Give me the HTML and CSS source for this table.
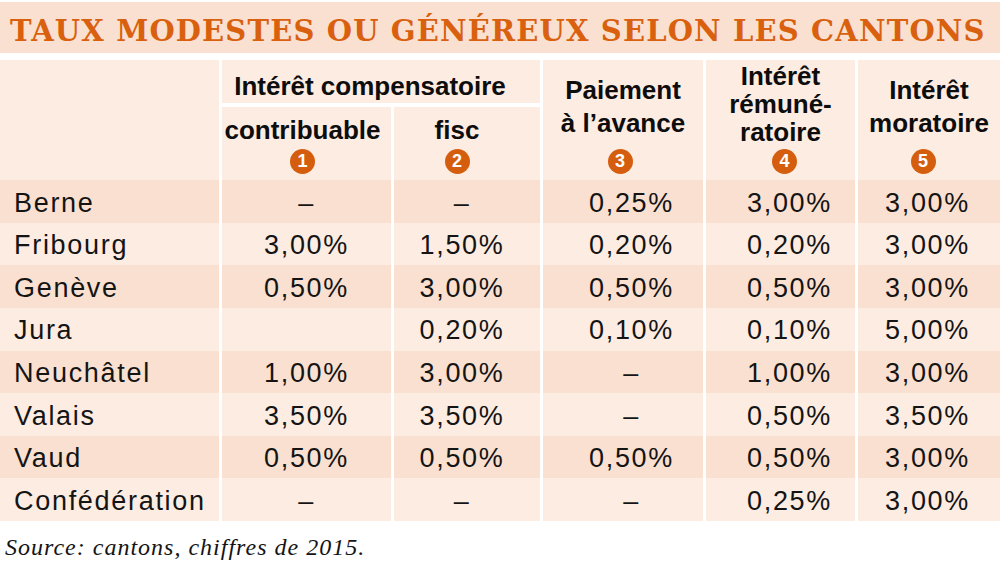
FILE: index.html
```html
<!DOCTYPE html>
<html lang="fr">
<head>
<meta charset="utf-8">
<title>Taux modestes ou généreux selon les cantons</title>
<link rel="stylesheet" href="styles.css">
</head>
<body>
<div class="page">
  <div class="band"><h1 class="title">TAUX MODESTES OU GÉNÉREUX SELON LES CANTONS</h1></div>
  <div class="table">
    <div class="h corner"></div>
    <div class="h group">Intérêt compensatoire</div>
    <div class="h tall c4"><div class="ht two">Paiement<br>à l’avance</div><span class="badge">3</span></div>
    <div class="h tall c5"><div class="ht three">Intérêt<br>rémuné-<br>ratoire</div><span class="badge">4</span></div>
    <div class="h tall c6"><div class="ht two">Intérêt<br>moratoire</div><span class="badge">5</span></div>
    <div class="h sub c2"><div class="ht one">contribuable</div><span class="badge">1</span></div>
    <div class="h sub c3"><div class="ht one">fisc</div><span class="badge">2</span></div>

    <div class="n d">Berne</div><div class="v d c2">–</div><div class="v d c3">–</div><div class="v d c4">0,25%</div><div class="v d c5">3,00%</div><div class="v d c6">3,00%</div>
    <div class="n l">Fribourg</div><div class="v l c2">3,00%</div><div class="v l c3">1,50%</div><div class="v l c4">0,20%</div><div class="v l c5">0,20%</div><div class="v l c6">3,00%</div>
    <div class="n d">Genève</div><div class="v d c2">0,50%</div><div class="v d c3">3,00%</div><div class="v d c4">0,50%</div><div class="v d c5">0,50%</div><div class="v d c6">3,00%</div>
    <div class="n l">Jura</div><div class="v l c2"></div><div class="v l c3">0,20%</div><div class="v l c4">0,10%</div><div class="v l c5">0,10%</div><div class="v l c6">5,00%</div>
    <div class="n d">Neuchâtel</div><div class="v d c2">1,00%</div><div class="v d c3">3,00%</div><div class="v d c4">–</div><div class="v d c5">1,00%</div><div class="v d c6">3,00%</div>
    <div class="n l">Valais</div><div class="v l c2">3,50%</div><div class="v l c3">3,50%</div><div class="v l c4">–</div><div class="v l c5">0,50%</div><div class="v l c6">3,50%</div>
    <div class="n d">Vaud</div><div class="v d c2">0,50%</div><div class="v d c3">0,50%</div><div class="v d c4">0,50%</div><div class="v d c5">0,50%</div><div class="v d c6">3,00%</div>
    <div class="n l">Confédération</div><div class="v l c2">–</div><div class="v l c3">–</div><div class="v l c4">–</div><div class="v l c5">0,25%</div><div class="v l c6">3,00%</div>
  </div>
  <p class="source">Source: cantons, chiffres de 2015.</p>
</div>
</body>
</html>
```

FILE: styles.css
```css
html, body {
  margin: 0;
  padding: 0;
  background: #ffffff;
}

.page {
  width: 1000px;
  height: 563px;
  overflow: hidden;
  color: #141414;
  font-family: "Liberation Sans", Arial, sans-serif;
}

.band {
  margin-top: 2px;
  height: 51px;
  background: #f9e0d0;
  box-sizing: border-box;
  padding: 12px 0 0 10px;
}

.title {
  margin: 0;
  font-family: "DejaVu Serif", "Liberation Serif", serif;
  font-weight: bold;
  font-size: 29px;
  line-height: 34px;
  letter-spacing: 1.15px;
  color: #d9600e;
  white-space: nowrap;
}

.table {
  margin-top: 7px;
  display: grid;
  grid-template-columns: 219px 169px 146px 160px 149px 142px;
  grid-template-rows: 47px 73px repeat(8, 42.625px);
  column-gap: 3px;
  background: #ffffff;
}

.h {
  background: #fcece2;
  font-weight: bold;
  font-size: 26px;
  text-align: center;
  color: #0d0d0d;
}

.corner {
  grid-column: 1;
  grid-row: 1 / 3;
}

.group {
  grid-column: 2 / 4;
  grid-row: 1;
  box-sizing: border-box;
  border-bottom: 4px solid #ffffff;
  padding: 12px 22px 0 0;
  line-height: 29px;
}

.tall, .sub {
  display: flex;
  flex-direction: column;
  align-items: center;
  justify-content: flex-end;
  padding-bottom: 6px;
}

.tall { grid-row: 1 / 3; }
.sub { grid-row: 2; }
.h.c2 { grid-column: 2; padding-right: 8px; }
.h.c3 { grid-column: 3; padding-right: 20px; }
.h.c4 { grid-column: 4; }
.h.c5 { grid-column: 5; }
.h.c6 { grid-column: 6; }

.ht.one { line-height: 29px; margin-bottom: 4.5px; }
.ht.two { line-height: 33px; margin-bottom: 9.5px; }
.ht.three { line-height: 28px; margin-bottom: 3px; }

.h.c5 .badge { margin-left: 8px; }
.h.c6 .badge { margin-right: 12px; }
.h.c4 .badge { margin-right: 6px; }

.badge {
  width: 25px;
  height: 25px;
  border-radius: 50%;
  background: #d55e0e;
  color: #ffffff;
  font-size: 18px;
  font-weight: bold;
  line-height: 25px;
  text-align: center;
}

.n, .v {
  font-size: 27px;
  letter-spacing: 1.7px;
  box-sizing: border-box;
  padding-top: 3.5px;
  line-height: 39px;
  white-space: nowrap;
}

.n { padding-left: 14px; }
.v { text-align: center; }
.v.c3 { padding-right: 10px; }
.v.c4 { padding-left: 17px; }
.v.c5 { padding-left: 18px; }
.v.c6 { padding-right: 3px; }

.d { background: #f9e0d0; }
.l { background: #fcece2; }

.source {
  margin: 0;
  padding: 13px 0 0 5px;
  font-family: "Liberation Serif", "Times New Roman", serif;
  font-style: italic;
  font-size: 24px;
  letter-spacing: 1px;
  line-height: 27px;
  color: #141414;
}
```
